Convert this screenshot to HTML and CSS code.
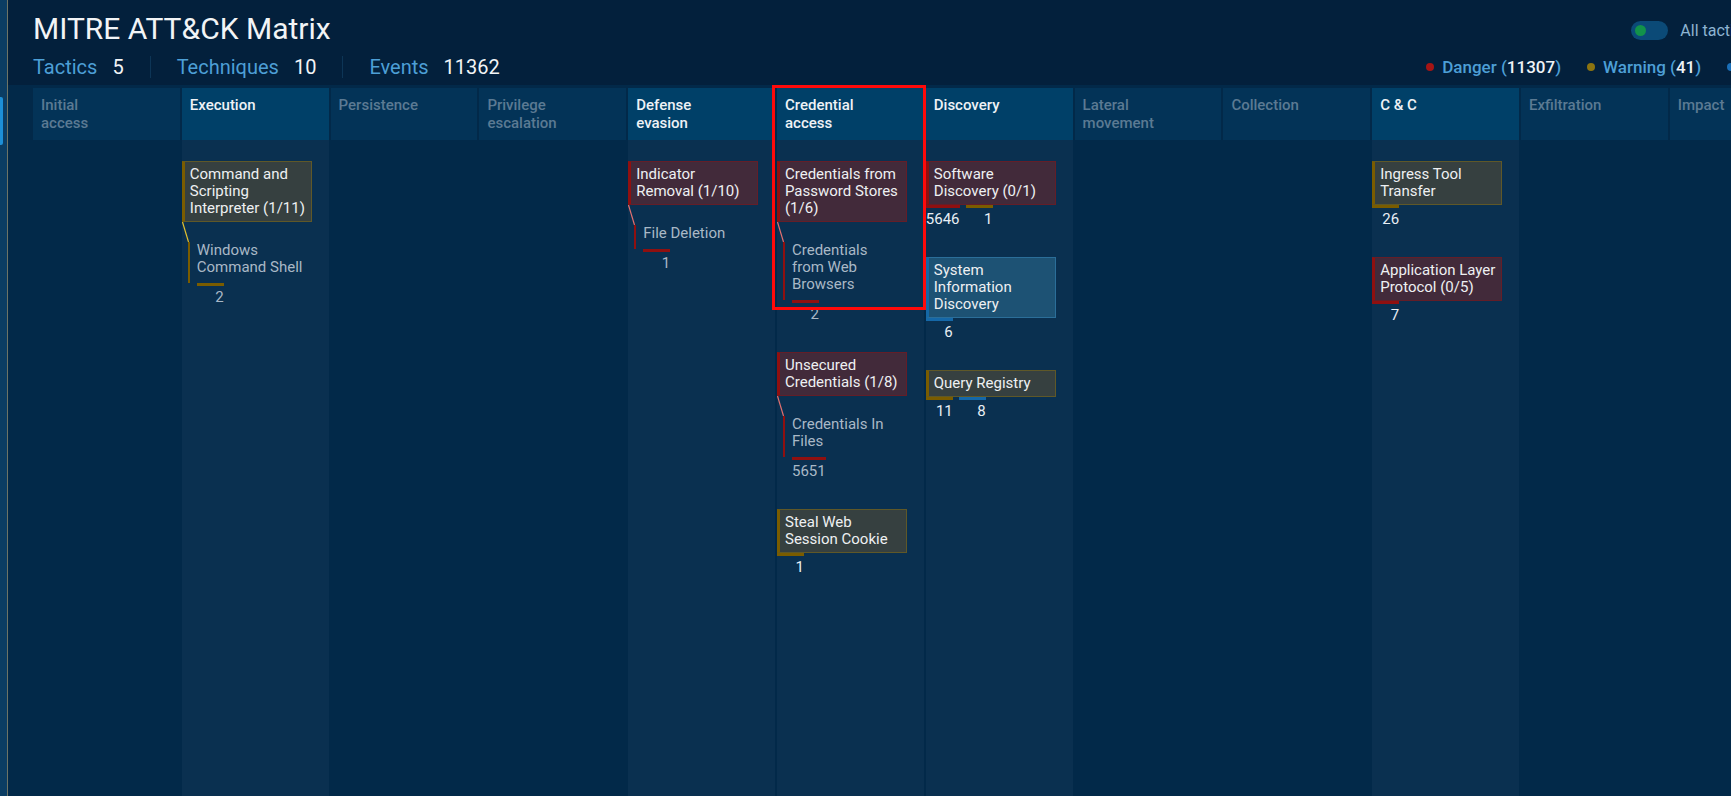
FILE: index.html
```html
<!DOCTYPE html>
<html lang="en">
<head>
<meta charset="utf-8">
<title>MITRE ATT&amp;CK Matrix</title>
<link rel="stylesheet" href="styles.css">
</head>
<body>
<div class="app">
  <aside class="rail"><span class="rail-tab"></span></aside>
  <main class="main">
    <header class="topbar">
      <div class="topbar-left">
        <h1 class="title">MITRE ATT&amp;CK Matrix</h1>
        <div class="stats">
          <div class="stat"><span class="stat-label">Tactics</span><span class="stat-value">5</span></div>
          <div class="stat"><span class="stat-label">Techniques</span><span class="stat-value">10</span></div>
          <div class="stat"><span class="stat-label">Events</span><span class="stat-value">11362</span></div>
        </div>
      </div>
      <div class="topbar-right">
        <div class="toggle-row">
          <span class="toggle"><span class="toggle-knob"></span></span>
          <span class="toggle-label">All tactics</span>
        </div>
        <div class="legend">
          <span class="legend-item"><span class="dot dot-red"></span><span>Danger (<span class="legend-num">11307</span>)</span></span>
          <span class="legend-item"><span class="dot dot-gold"></span><span>Warning (<span class="legend-num">41</span>)</span></span>
          <span class="legend-item"><span class="dot dot-blue"></span><span>Info (<span class="legend-num">14</span>)</span></span>
        </div>
      </div>
    </header>

    <section class="matrix">
      <div class="col">
        <div class="col-head"><span>Initial access</span></div>
        <div class="col-body"></div>
      </div>

      <div class="col active">
        <div class="col-head"><span>Execution</span></div>
        <div class="col-body">
          <div class="group gold">
            <div class="tech gold">Command and Scripting Interpreter (1/11)</div>
            <svg class="link" viewBox="0 0 8 20" width="8" height="20"><line x1="0.5" y1="0" x2="6.5" y2="20"/></svg>
            <div class="sub-body">Windows Command Shell</div>
            <div class="counts nested"><span class="count gold">2</span></div>
          </div>
        </div>
      </div>

      <div class="col">
        <div class="col-head"><span>Persistence</span></div>
        <div class="col-body"></div>
      </div>

      <div class="col">
        <div class="col-head"><span>Privilege escalation</span></div>
        <div class="col-body"></div>
      </div>

      <div class="col active">
        <div class="col-head"><span>Defense evasion</span></div>
        <div class="col-body">
          <div class="group red">
            <div class="tech red">Indicator Removal (1/10)</div>
            <svg class="link" viewBox="0 0 8 20" width="8" height="20"><line x1="0.5" y1="0" x2="6.5" y2="20"/></svg>
            <div class="sub-body">File Deletion</div>
            <div class="counts nested"><span class="count red">1</span></div>
          </div>
        </div>
      </div>

      <div class="col active">
        <div class="col-head"><span>Credential access</span></div>
        <div class="col-body">
          <div class="group red">
            <div class="tech red">Credentials from Password Stores (1/6)</div>
            <svg class="link" viewBox="0 0 8 20" width="8" height="20"><line x1="0.5" y1="0" x2="6.5" y2="20"/></svg>
            <div class="sub-body">Credentials from Web Browsers</div>
            <div class="counts nested"><span class="count red">2</span></div>
          </div>
          <div class="group red">
            <div class="tech red">Unsecured Credentials (1/8)</div>
            <svg class="link" viewBox="0 0 8 20" width="8" height="20"><line x1="0.5" y1="0" x2="6.5" y2="20"/></svg>
            <div class="sub-body">Credentials In Files</div>
            <div class="counts nested"><span class="count red">5651</span></div>
          </div>
          <div class="group gold">
            <div class="tech gold">Steal Web Session Cookie</div>
            <div class="counts"><span class="count gold">1</span></div>
          </div>
        </div>
        <div class="highlight"></div>
      </div>

      <div class="col active">
        <div class="col-head"><span>Discovery</span></div>
        <div class="col-body">
          <div class="group red">
            <div class="tech red">Software Discovery (0/1)</div>
            <div class="counts"><span class="count red">5646</span><span class="count gold">1</span></div>
          </div>
          <div class="group blue">
            <div class="tech blue">System Information Discovery</div>
            <div class="counts"><span class="count blue">6</span></div>
          </div>
          <div class="group gold">
            <div class="tech gold">Query Registry</div>
            <div class="counts"><span class="count gold">11</span><span class="count blue">8</span></div>
          </div>
        </div>
      </div>

      <div class="col">
        <div class="col-head"><span>Lateral movement</span></div>
        <div class="col-body"></div>
      </div>

      <div class="col">
        <div class="col-head"><span>Collection</span></div>
        <div class="col-body"></div>
      </div>

      <div class="col active">
        <div class="col-head"><span>C &amp; C</span></div>
        <div class="col-body">
          <div class="group gold">
            <div class="tech gold">Ingress Tool Transfer</div>
            <div class="counts"><span class="count gold">26</span></div>
          </div>
          <div class="group red">
            <div class="tech red">Application Layer Protocol (0/5)</div>
            <div class="counts"><span class="count red">7</span></div>
          </div>
        </div>
      </div>

      <div class="col">
        <div class="col-head"><span>Exfiltration</span></div>
        <div class="col-body"></div>
      </div>

      <div class="col">
        <div class="col-head"><span>Impact</span></div>
        <div class="col-body"></div>
      </div>
    </section>
  </main>
</div>
</body>
</html>
```

FILE: styles.css
```css
* { box-sizing: border-box; }

html, body {
  margin: 0;
  height: 100%;
}

body {
  background: #022949;
  font-family: Roboto, "Noto Sans", "Liberation Sans", sans-serif;
  color: #e8eef4;
  overflow: hidden;
}

.app {
  display: flex;
  height: 100vh;
  width: max-content;
  min-width: 100%;
}

/* left rail */
.rail {
  width: 8px;
  flex-shrink: 0;
  background: #0b3d63;
  border-right: 1px solid #6d7466;
  position: relative;
}

.rail-tab {
  position: absolute;
  left: 0;
  top: 97px;
  width: 3px;
  height: 48px;
  background: #1d8fd6;
  border-radius: 0 2px 2px 0;
}

.main {
  flex: 1;
  display: flex;
  flex-direction: column;
}

/* top bar */
.topbar {
  display: flex;
  justify-content: space-between;
  background: #03203c;
  padding: 11px 33px 7px 25px;
}

.title {
  margin: 0;
  font-size: 30px;
  font-weight: 400;
  line-height: 36px;
  color: #f2f4f6;
}

.stats {
  display: flex;
  margin-top: 9px;
  font-size: 20px;
  line-height: 22px;
}

.stat {
  display: flex;
  gap: 15px;
  padding: 0 26px;
  border-left: 1px solid #0d3556;
}

.stat:first-child {
  padding-left: 0;
  border-left: 0;
}

.stat-label { color: #4d9fd6; }
.stat-value { color: #f2f4f6; }

.topbar-right {
  display: flex;
  flex-direction: column;
  align-items: flex-end;
  padding-top: 10px;
}

.toggle-row {
  display: flex;
  align-items: center;
  gap: 12px;
  height: 19px;
  margin-right: 58px;
  font-size: 16px;
  color: #8db4d2;
}

.toggle {
  display: flex;
  align-items: center;
  width: 37px;
  height: 19px;
  padding: 0 4px;
  border-radius: 10px;
  background: #0b4a77;
}

.toggle-knob {
  width: 11px;
  height: 11px;
  border-radius: 50%;
  background: #12924a;
}

.legend {
  display: flex;
  gap: 26px;
  margin-top: 16px;
  font-size: 17px;
  line-height: 22px;
  font-weight: 500;
}

.legend-item {
  display: flex;
  align-items: center;
  gap: 8px;
  color: #4d9fd6;
}

.legend-num { color: #eef2f6; }

.dot {
  width: 8px;
  height: 8px;
  border-radius: 50%;
}

.dot-red { background: #a51515; }
.dot-gold { background: #8c7410; }
.dot-blue { background: #1a6fb8; }

/* matrix */
.matrix {
  flex: 1;
  display: flex;
  gap: 2px;
  padding: 3px 25px 0 25px;
}

.col {
  width: 146.8px;
  flex-shrink: 0;
  display: flex;
  flex-direction: column;
  position: relative;
}

.col-head {
  height: 52px;
  padding: 8px 8px 6px;
  background: #033357;
  color: #5b7a93;
  font-size: 15px;
  font-weight: 500;
  line-height: 18px;
}

.col-head span {
  display: block;
  max-width: 88px;
}

.col.active .col-head {
  background: #004068;
  color: #eef2f6;
}

.col-body {
  flex: 1;
  display: flex;
  flex-direction: column;
  gap: 29px;
  padding-top: 21px;
}

.col.active .col-body { background: #0a3050; }

.highlight {
  position: absolute;
  left: -5px;
  top: -3px;
  width: 154px;
  height: 225px;
  border: 3px solid #ff0a0a;
  pointer-events: none;
}

/* technique groups */
.group {
  display: flex;
  flex-direction: column;
  align-items: flex-start;
}

.tech {
  width: 130px;
  padding: 4px 1px 4px 5px;
  border: 1px solid;
  border-left-width: 3px;
  font-size: 15px;
  line-height: 17px;
  color: #eef0f2;
}

.tech.red { background: #422a3a; border-color: #641e28; border-left-color: #8f1010; }
.tech.gold { background: #364040; border-color: #5f5828; border-left-color: #7a5c00; }
.tech.blue { background: #1d5274; border-color: #2b6e99; border-left-color: #1467a6; }

.link {
  display: block;
  width: 8px;
  height: 20px;
}

.link line { stroke-width: 1.2; }
.group.red .link line { stroke: #e07070; }
.group.gold .link line { stroke: #e0c030; }

.sub-body {
  margin-left: 6px;
  width: 124px;
  border-left: 2px solid;
  padding: 0 6px 7px 7px;
  color: #a9b8c6;
  font-size: 15px;
  line-height: 17px;
}

.group.red .sub-body { border-left-color: #8f1010; }
.group.gold .sub-body { border-left-color: #7a5c00; }

.counts {
  display: flex;
  gap: 6px;
}

.counts.nested { margin-left: 15px; }

.count {
  min-width: 27px;
  border-top: 3px solid;
  padding-top: 3px;
  text-align: right;
  font-size: 15px;
  line-height: 17px;
  color: #e8eef4;
}

.counts.nested .count { color: #a9b8c6; }

.count.red { border-top-color: #8f1010; }
.count.gold { border-top-color: #7a5c00; }
.count.blue { border-top-color: #1568a8; }
```
